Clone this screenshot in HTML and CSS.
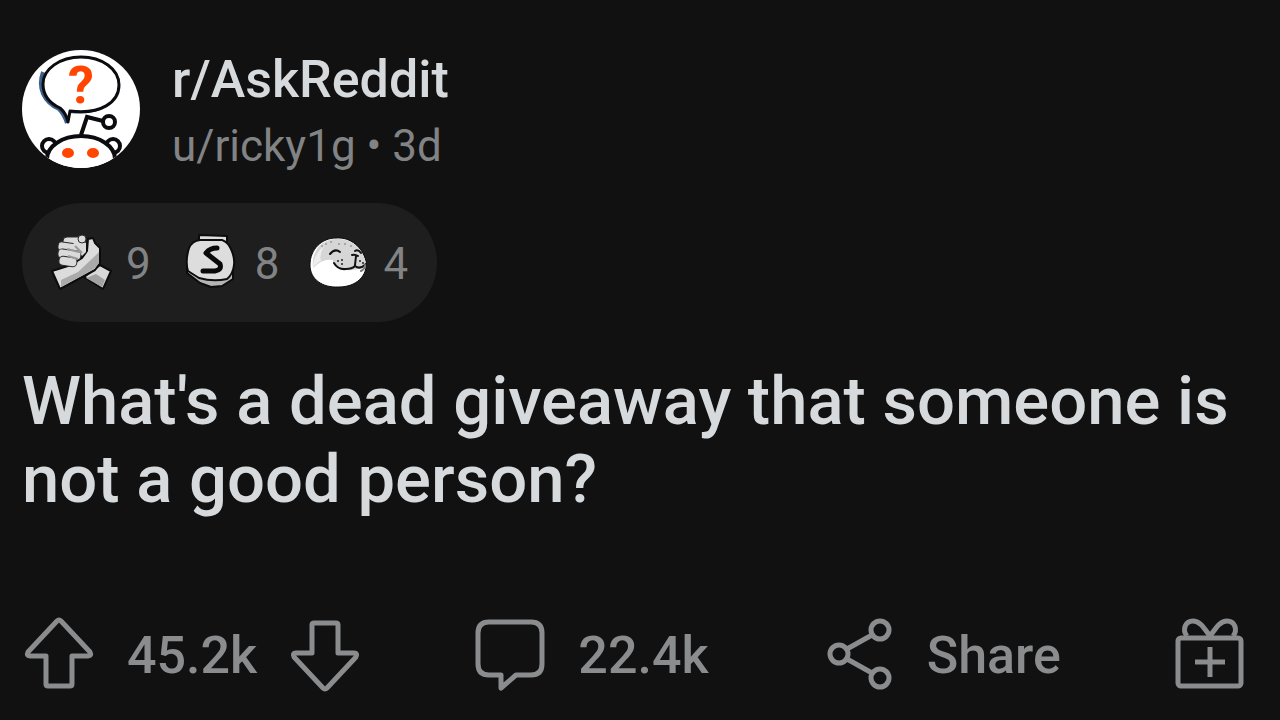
FILE: index.html
```html
<!DOCTYPE html>
<html lang="en">
<head>
    <meta charset="UTF-8">
    <meta name="viewport" content="width=device-width, initial-scale=1.0">
    <title>r/AskReddit</title>
    <link rel="stylesheet" href="styles.css">
</head>
<body>
    <article class="post">
        <header class="post-header">
            <svg class="avatar" viewBox="0 0 118 118" aria-hidden="true">
                <defs><clipPath id="round"><circle cx="59" cy="59" r="59"/></clipPath></defs>
                <g clip-path="url(#round)">
                    <rect width="118" height="118" fill="#fff"/>
                    <path d="M21 22C15 38 22 52 37 59Q42 64 45 73M48 61Q66 63 78 58" fill="none" stroke="#3d6289" stroke-width="4"/>
                    <path d="M48 61C79 65 97 52 97 35C97 19 80 7 59 7S21 19 21 34C21 45 27 53 38 58Q44 63 46 72Z" fill="#fff" stroke="#0b0b10" stroke-width="3" stroke-linejoin="round"/>
                    <text class="avatar-mark" x="59" y="53" text-anchor="middle">?</text>
                    <g fill="#fff" stroke="#0b0b10" stroke-width="4">
                        <path d="M59 85l6-18 16 4" fill="none"/>
                        <circle cx="87" cy="72" r="6"/>
                        <circle cx="27" cy="96" r="7"/>
                        <circle cx="91" cy="96" r="7"/>
                        <ellipse cx="59" cy="109" rx="34" ry="23"/>
                    </g>
                    <ellipse cx="46" cy="103" rx="6" ry="5" fill="#ff4500"/>
                    <ellipse cx="71" cy="103" rx="6" ry="5" fill="#ff4500"/>
                </g>
            </svg>
            <div class="post-meta">
                <a class="subreddit" href="#">r/AskReddit</a>
                <p class="byline"><a href="#">u/ricky1g</a> • 3d</p>
            </div>
        </header>

        <ul class="awards">
            <li>
                <!-- clasped hands -->
                <svg class="award-icon" viewBox="0 0 60 60" aria-hidden="true">
                    <g stroke="#0c0c0c" stroke-width="2" stroke-linejoin="round">
                        <path d="M33 43L44 35L49 31L60 37L52 55Z" fill="#d8d8d8"/>
                        <path d="M35 44L45 40L54 46L51 53Z" fill="#a2a2a2" stroke="none"/>
                        <path d="M1 37L20 31L31 24L36 17L37 5L42 4L44 9L49 14V29L44 36L9 55Z" fill="#dcdcdc"/>
                    </g>
                    <path d="M10 46L27 38L44 22L48 18V29L43 35L10 53Z" fill="#aaa"/>
                    <!-- fingers -->
                    <g fill="#dadada" stroke="#2a2a2a" stroke-width="1">
                        <rect x="12" y="3" width="21" height="9" rx="4"/>
                        <rect x="7" y="9" width="24" height="9" rx="4" transform="rotate(8 19 13)"/>
                        <rect x="7" y="16" width="23" height="9" rx="4" transform="rotate(8 19 20)"/>
                        <rect x="8" y="23" width="18" height="9" rx="4" transform="rotate(8 17 27)"/>
                        <path d="M27 5L35 9V18L31 22L27 15L22 10Z" stroke="none"/>
                        <circle cx="31" cy="5" r="4"/>
                    </g>
                    <path d="M24 12l7 7M16 15l12 3M17 22l10 3" fill="none" stroke="#999" stroke-width="2"/>
                </svg>
                <span>9</span>
            </li>
            <li>
                <!-- stitched S pouch -->
                <svg class="award-icon" viewBox="0 0 60 60" aria-hidden="true">
                    <g stroke="#0c0c0c" stroke-width="2" stroke-linejoin="round">
                        <path d="M19 1L47 2V11H19Z" fill="#ddd"/>
                        <path d="M7 30V39L20 49L31 53L42 52L53 45V30Z" fill="#b4b4b4"/>
                        <path d="M20 6H42Q48 8 51 15Q55 24 54 31Q53 40 47 45Q33 48 19 44L8 37Q5 27 9 14Q12 7 20 6Z" fill="#ddd"/>
                    </g>
                    <path d="M37 14Q30 14 26 19L40 30Q42 36 35 37H23" fill="none" stroke="#090909" stroke-width="5" stroke-linecap="round" stroke-linejoin="round"/>
                </svg>
                <span>8</span>
            </li>
            <li>
                <!-- smiling seal -->
                <svg class="award-icon" viewBox="0 0 60 60" aria-hidden="true">
                    <path d="M28 4C43 3 54 13 58 27C60 42 48 53 31 53C14 54 2 45 2 31C2 15 14 4 28 4Z" fill="#fff" stroke="#0c0c0c"/>
                    <path d="M28 5C43 4 53 13 57 26L58 31Q46 39 33 35Q24 32 25 26Q15 24 5 34C3 17 14 5 28 5Z" fill="#d6d6d6"/>
                    <path d="M5 34Q5 21 16 12Q11 21 13 27Q8 29 5 34Z" fill="#eee"/>
                    <g fill="none" stroke="#111" stroke-width="2" stroke-linecap="round">
                        <path d="M22 20Q27 14 32 18M47 17Q50 15 53 19M44 21Q47 20 50 22M48 22L47 31M26 29Q30 36 38 35Q44 35 47 32Q52 36 58 30"/>
                        <path d="M53 37Q57 35 57 31" stroke="#777"/>
                    </g>
                    <g fill="#222">
                        <circle cx="30" cy="27" r="1"/><circle cx="34" cy="26" r="1"/><circle cx="34" cy="30" r="1"/><circle cx="52" cy="27" r="1"/><circle cx="55" cy="29" r="1"/>
                    </g>
                    <g fill="#999">
                        <circle cx="14" cy="12" r="1"/><circle cx="18" cy="10" r="1"/><circle cx="23" cy="8" r="1"/><circle cx="31" cy="10" r="1"/><circle cx="37" cy="10" r="1"/><circle cx="43" cy="12" r="1"/>
                    </g>
                </svg>
                <span>4</span>
            </li>
        </ul>

        <h1 class="title">What's a dead giveaway that someone is not a good person?</h1>

        <footer class="actions">
            <div class="votes">
                <button type="button" aria-label="Upvote">
                    <svg class="icon" viewBox="0 2 70 76"><path d="M33 5L4 36Q2 40 6 40H22V68Q22 70 24 70H46Q48 70 48 68V40H64Q68 40 66 36L37 5Q35 3 33 5Z"/></svg>
                </button>
                <span class="score">45.2k</span>
                <button type="button" aria-label="Downvote">
                    <svg class="icon" viewBox="0 2 70 76"><path d="M33 72L4 41Q2 37 6 37H22V9Q22 7 24 7H46Q48 7 48 9V37H64Q68 37 66 41L37 72Q35 74 33 72Z"/></svg>
                </button>
            </div>
            <button class="action" type="button">
                <svg class="icon" viewBox="0 2 70 76" aria-hidden="true"><path d="M14 6H56Q67 6 67 17V48Q67 59 56 59H41L26 72V59H14Q3 59 3 48V17Q3 6 14 6Z"/></svg>
                22.4k
            </button>
            <button class="action" type="button">
                <svg class="icon" viewBox="0 2 70 76" aria-hidden="true"><circle cx="15" cy="38" r="9"/><circle cx="56" cy="14" r="9"/><circle cx="56" cy="62" r="9"/><path d="M23 33L48 19M23 43L48 57"/></svg>
                Share
            </button>
            <button class="action" type="button" aria-label="Give award">
                <svg class="icon" viewBox="0 2 70 76"><rect x="2" y="22" width="63" height="48" rx="3"/><path d="M19 46H49M34 31V61M34 20C29 14 25 5 17 5C9 5 6 14 11 20M34 20C39 14 43 5 51 5C59 5 62 14 57 20"/></svg>
            </button>
        </footer>
    </article>
</body>
</html>
```

FILE: styles.css
```css
* { margin: 0; padding: 0; box-sizing: border-box; }
body { font-family: Roboto, sans-serif; background: #111; color: #d7dadc; }
a { color: inherit; text-decoration: none; }
button { background: none; border: none; color: inherit; font: inherit; cursor: pointer; }
svg { display: block; flex: none; overflow: visible; }

.post { padding: 50px 34px 20px 22px; }
.post-header { display: flex; gap: 32px; }
.avatar { width: 118px; height: 118px; }
.avatar-mark { font: bold 52px Roboto, sans-serif; fill: #ff4500; }
.subreddit { display: block; font-size: 52px; font-weight: 500; line-height: 60px; }
.byline { color: #818384; font-size: 44px; line-height: 60px; margin-top: 6px; }

.awards { display: inline-flex; gap: 29px; margin-top: 27px; padding: 31px 29px 28px; background: #1e1e1e; border-radius: 60px; list-style: none; color: #818384; }
.awards li { display: flex; align-items: center; gap: 15px; font-size: 44px; line-height: 60px; }
.award-icon { width: 60px; height: 60px; }

.title { margin-top: 40px; font-size: 67px; font-weight: 500; line-height: 78px; }

.actions { display: flex; justify-content: space-between; align-items: center; margin-top: 100px; padding-left: 2px; color: #8a8c8e; font-size: 52px; font-weight: 500; line-height: 76px; }
.votes, .action { display: flex; align-items: center; gap: 33px; }
.icon { width: 70px; height: 76px; fill: none; stroke: #8a8c8e; stroke-width: 5; stroke-linejoin: round; }
```
